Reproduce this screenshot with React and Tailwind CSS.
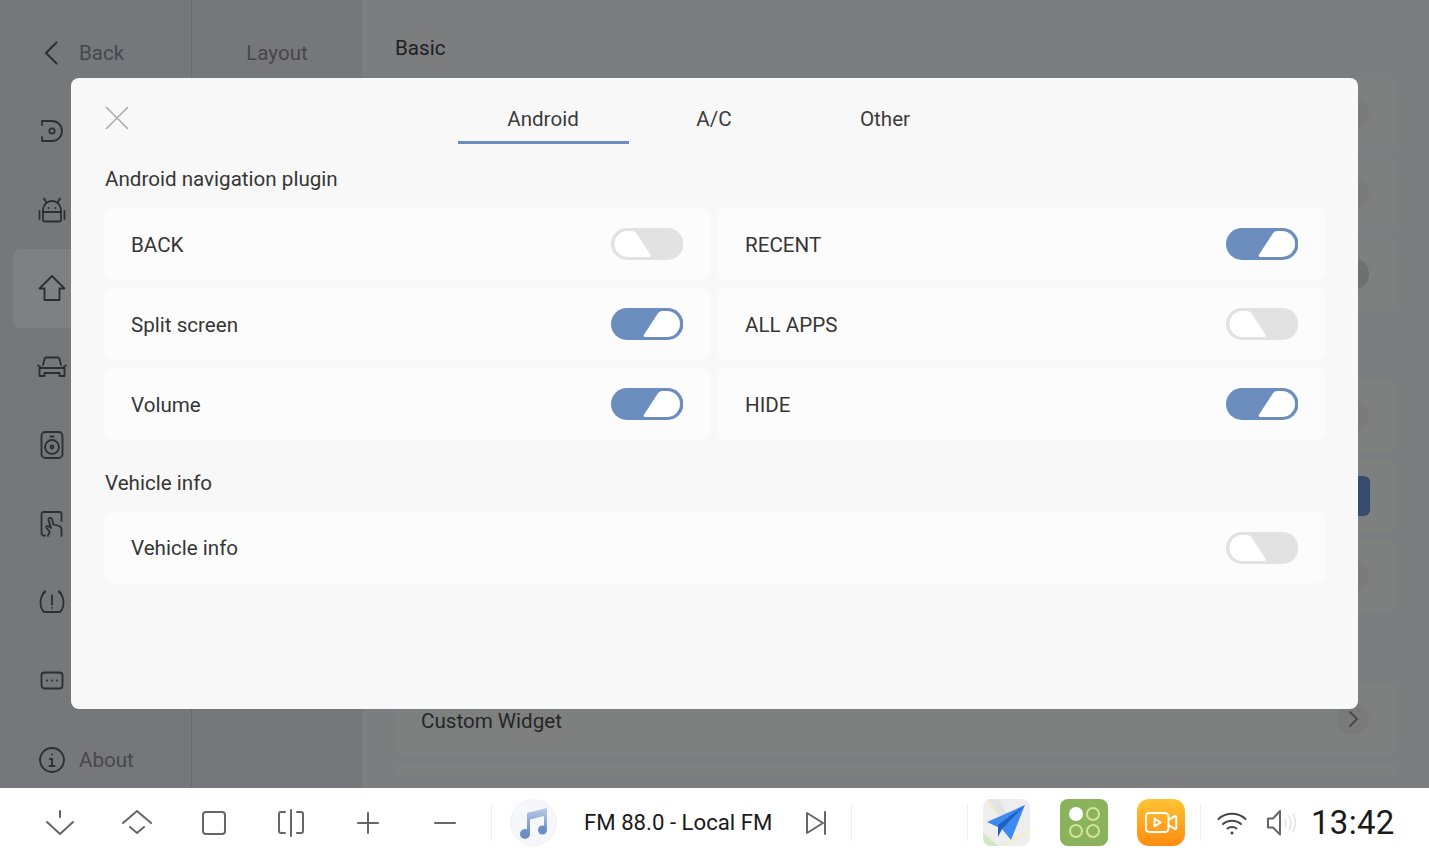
import { useState } from 'react'

// toggle drawn as one shape because the knob is slanted on one side
const Toggle = ({ on }) => (
  <svg width="72.5" height="32" viewBox="0 0 73 32" className="shrink-0">
    <rect x="0" y="0" width="73" height="32" rx="16" fill={on ? '#6b8ebf' : '#e2e2e2'} />
    {on
      ? <path d="M33 27 Q32.5 29 34.5 29 H56.5 A13 13 0 0 0 56.5 3 H52 Q48.5 3 46.5 6.5 Z" fill="#fff" />
      : <path d="M40 27 Q40.5 29 38.5 29 H16.5 A13 13 0 0 1 16.5 3 H21 Q24.5 3 26.5 6.5 Z" fill="#fff" />}
  </svg>
)

const Row = ({ label, on, h = 'h-[72px]' }) => (
  <div className={`${h} bg-[#fcfcfc] rounded-lg pl-[27px] pr-[27px] flex items-center justify-between`}>
    <span className="text-[20.6px] text-[#363636] mt-[2px]">{label}</span>
    <Toggle on={on} />
  </div>
)

const stroke = { fill: 'none', stroke: '#2d2e30', strokeWidth: 1.8, strokeLinecap: 'round', strokeLinejoin: 'round' }

const sideIcons = [
  // dashcam disc
  <svg key="a" width="28" height="28" viewBox="0 0 28 28" {...stroke}><path d="M4 8V4h10a10 10 0 0 1 0 20H4v-4" /><circle cx="14" cy="14" r="2.7" /></svg>,
  // android
  <svg key="b" width="28" height="28" viewBox="0 0 28 28" {...stroke}><path d="M5 24V14a9 9 0 0 1 18 0v10a1.500 1.500 0 0 1-1.500 1.500h-15A1.500 1.500 0 0 1 5 24Z" /><path d="M5 16h18M8 6 6 2.500M20 6l2-3.500M1.500 15v8M26.500 15v8" /><path d="M10.500 12h.1M17.500 12h.1" /></svg>,
  // home
  <svg key="c" width="28" height="28" viewBox="0 0 28 28" {...stroke}><path d="M14 2 1.500 14.500H6.500V26h15V14.500h5Z" /></svg>,
  // car
  <svg key="d" width="30" height="28" viewBox="0 0 30 28" {...stroke}><path d="M3 15h24M6 12l1.500-6a2 2 0 0 1 2-1.500h11a2 2 0 0 1 2 1.500L24 12M1 12.500l3 2M29 12.500l-3 2M2.500 15v8h5v-3h15v3h5v-8" /></svg>,
  // speaker
  <svg key="e" width="28" height="28" viewBox="0 0 28 28" {...stroke}><rect x="3.500" y="1" width="21" height="26" rx="4" /><circle cx="14" cy="16" r="7" /><circle cx="14" cy="16" r="1.500" /><path d="M12.500 5.500h3" /></svg>,
  // touch: frame open at the lower right, hand with raised finger
  <svg key="f" width="28" height="28" viewBox="0 0 28 28" {...stroke}><path d="M7 25.500H5.500a2 2 0 0 1-2-2V4a2 2 0 0 1 2-2h16a2 2 0 0 1 2 2v7" /><path d="M10 26c-.500-2 2.500-2.500 1.500-4.500L8.500 18c-1-1.500 1-3 2.500-1.500l2 1.500-2.500-8c-.500-2.500 3-3 3.500-.500l1.500 5 5.500 1.500c2 .500 2.500 2 2.500 3.500V26" /></svg>,
  // tpms
  <svg key="g" width="26" height="26" viewBox="0 0 26 26" {...stroke}><path d="M6 2.500C2.500 6 1.500 10 1.500 13.500c0 4 1.500 7.500 3.500 9.500h16c2-2 3.500-5.500 3.500-9.500 0-3.500-1-7.500-4.500-11" /><path d="M13 6.500v9M13 19v.1M6 2.500 4 4.500M20 2.500l2 2" /></svg>,
  // more
  <svg key="h" width="28" height="28" viewBox="0 0 28 28" {...stroke}><rect x="3.500" y="5.500" width="21" height="16" rx="3" /><path d="M9 13.500h.1M14 13.500h.1M19 13.500h.1" /></svg>,
]

const bar = { fill: 'none', stroke: '#666666', strokeWidth: 2, strokeLinecap: 'round', strokeLinejoin: 'round' }

const navIcons = [
  <svg key="a" width="30" height="26" viewBox="0 0 30 26" {...bar}><path d="M15 1v6M2 12l13 12 13-12" /></svg>,
  <svg key="b" width="32" height="26" viewBox="0 0 32 26" {...bar}><path d="M2 13 16 1l14 12M9 17l7 6 7-6" /></svg>,
  <svg key="c" width="26" height="26" viewBox="0 0 26 26" {...bar}><rect x="2" y="2" width="22" height="22" rx="3" /></svg>,
  <svg key="d" width="28" height="28" viewBox="0 0 28 28" {...bar}><path d="M8 3H4a2 2 0 0 0-2 2v17a2 2 0 0 0 2 2h4M20 3h4a2 2 0 0 1 2 2v17a2 2 0 0 1-2 2h-4M14 1v26" /></svg>,
  <svg key="e" width="24" height="24" viewBox="0 0 24 24" {...bar}><path d="M12 2v20M2 12h20" /></svg>,
  <svg key="f" width="24" height="24" viewBox="0 0 24 24" {...bar}><path d="M2 12h20" /></svg>,
]

const Sep = ({ className }) => <div className={`w-px h-[37px] bg-[#eeeeee] shrink-0 ${className}`} />

export default function App() {
  const [tab] = useState('Android')
  return (
    <div className="relative w-[1429px] h-[857px] overflow-hidden bg-white flex flex-col" style={{ fontFamily: 'Roboto, sans-serif' }}>

      {/* page behind the dialog */}
      <div className="h-[788px] shrink-0 flex bg-[#76777b] overflow-hidden">
        <div className="w-[192px] shrink-0 border-r border-[#6b6c70] flex flex-col">
          <div className="h-[92px] shrink-0 flex items-center pl-[44px] pt-[13px] gap-[21px]">
            <svg width="14" height="24" viewBox="0 0 14 24" fill="none" stroke="#2d2e30" strokeWidth="2" strokeLinecap="round" strokeLinejoin="round"><path d="M12.500 1.500 2 12l10.500 10.500" /></svg>
            <span className="text-[20.6px] text-[#47484b] mt-[1px]">Back</span>
          </div>
          <div className="flex flex-col pl-[13px]">
            {sideIcons.map((icon, i) => (
              <div key={i} className={`h-[78.5px] w-[78px] rounded-lg flex items-center justify-center ${i === 2 ? 'bg-[#7f8083]' : ''}`}>{icon}</div>
            ))}
          </div>
          <div className="flex items-center pl-[39px] gap-[14px] mt-[25px]">
            <svg width="26" height="26" viewBox="0 0 26 26" fill="none" stroke="#2d2e30" strokeWidth="1.8" strokeLinecap="round" strokeLinejoin="round"><circle cx="13" cy="13" r="12" /><path d="M11 12h2v7M10.500 19h5M13 7.500v.1" /></svg>
            <span className="text-[20.6px] text-[#47484b]">About</span>
          </div>
        </div>
        <div className="w-[170px] shrink-0 flex justify-center pt-[39px]">
          <span className="text-[20.6px] leading-[28px] text-[#47484b]">Layout</span>
        </div>
        <div className="flex-1 bg-[#7c7d7f] pl-[33px] pr-[33px] flex flex-col overflow-hidden">
          <div className="h-[78px] shrink-0 pt-[34px] text-[20.6px] leading-[28px] text-[#1f2021]">Basic</div>
          <div className="flex flex-col gap-2">
            {[0, 1, 2].map(i => (
              <div key={i} className="h-[72px] bg-[#7e807f] rounded-lg flex items-center justify-end pr-[27px]">
                <div className={`w-8 h-8 rounded-full ${i === 2 ? 'bg-[#6f7070]' : 'bg-[#7a7b7a]'}`} />
              </div>
            ))}
          </div>
          <div className="flex flex-col gap-2 mt-[70px]">
            {[0, 1, 2].map(i => (
              <div key={i} className="h-[72px] bg-[#7e807f] rounded-lg flex items-center justify-end pr-[26px]">
                {i === 1
                  ? <div className="w-[80px] h-10 rounded-md bg-[#374b6c]" />
                  : <div className="w-8 h-8 mr-px rounded-full bg-[#7a7b7a]" />}
              </div>
            ))}
          </div>
          <div className="h-[72px] shrink-0 mt-[71px] bg-[#7e807f] rounded-lg flex items-center justify-between pl-[26px] pr-[27px]">
            <span className="text-[20.6px] text-[#252627] mt-[4px]">Custom Widget</span>
            <div className="w-8 h-8 rounded-full bg-[#797a79] flex items-center justify-center">
              <svg width="9" height="16" viewBox="0 0 9 16" fill="none" stroke="#47484b" strokeWidth="1.8" strokeLinecap="round" strokeLinejoin="round"><path d="m1 1 7 7-7 7" /></svg>
            </div>
          </div>
          <div className="h-[12px] shrink-0 mt-2 bg-[#7e807f] rounded-t-lg" />
        </div>
      </div>

      {/* dialog */}
      <div className="absolute left-[71px] top-[78px] w-[1287px] h-[631px] bg-[#f8f8f8] rounded-lg px-[33px]">
        <div className="relative h-[66px] flex justify-center">
          <svg className="absolute left-[1px] top-[28px]" width="24" height="24" viewBox="0 0 24 24" fill="none" stroke="#a8a8a8" strokeWidth="1.5"><path d="M1 1l22 22M23 1 1 23" /></svg>
          {['Android', 'A/C', 'Other'].map(t => (
            <div key={t} className={`w-[171px] flex items-center justify-center pt-[20px] pr-px text-[20.6px] text-[#3c3c3c] border-b-[3px] ${tab === t ? 'border-[#6b8ebf]' : 'border-transparent'}`}>{t}</div>
          ))}
        </div>
        <div className="text-[20.6px] leading-[28px] text-[#363636] pl-px mt-[21px] mb-[15px]">Android navigation plugin</div>
        <div className="grid grid-cols-[606px_607px] gap-2">
          <Row label="BACK" on={false} />
          <Row label="RECENT" on />
          <Row label="Split screen" on />
          <Row label="ALL APPS" on={false} />
          <Row label="Volume" on />
          <Row label="HIDE" on />
        </div>
        <div className="text-[20.6px] leading-[28px] text-[#363636] pl-px mt-[29px] mb-[15px]">Vehicle info</div>
        <Row label="Vehicle info" on={false} h="h-[71px]" />
      </div>

      {/* system bar */}
      <div className="flex-1 flex items-center bg-white pl-[21px]">
        {navIcons.map((icon, i) => (
          <div key={i} className="w-[77px] shrink-0 flex items-center justify-center">{icon}</div>
        ))}
        <Sep className="ml-[8px]" />
        <div className="ml-[18px] w-[47px] h-[47px] rounded-full bg-[#f6f7fb] border border-[#f0f1f5] flex items-center justify-center shrink-0">
          <svg width="30" height="32" viewBox="0 0 30 32">
            <defs><linearGradient id="note" x1="0" y1="0" x2="0" y2="1"><stop offset="0" stopColor="#b9c9ea" /><stop offset="1" stopColor="#6b8ec6" /></linearGradient></defs>
            <path d="M8 6 28 1v22h-3V9L11 12.500V27H8Z" fill="url(#note)" />
            <circle cx="6" cy="27" r="5" fill="#6b8ec6" /><circle cx="23.500" cy="23" r="4.500" fill="#6b8ec6" />
          </svg>
        </div>
        <span className="ml-[27px] w-[188px] shrink-0 whitespace-nowrap text-[22.2px] text-[#1a1a1a] mt-[1px]">FM 88.0 - Local FM</span>
        <div className="ml-[33px] shrink-0">
          <svg width="22" height="24" viewBox="0 0 22 24" fill="none" stroke="#666666" strokeWidth="2" strokeLinecap="round" strokeLinejoin="round"><path d="M2 2v20l16-10ZM20 1v22" /></svg>
        </div>
        <Sep className="ml-[24px]" />
        <Sep className="ml-[115px]" />
        <div className="ml-[15px] w-[47px] h-[47px] rounded-lg overflow-hidden shrink-0">
          <svg width="47" height="47" viewBox="0 0 47 47">
            <rect width="47" height="47" fill="#eeeeee" />
            <path d="M0 34 16 47H0Z" fill="#cfe8c4" />
            <path d="M2 0h14l8 14-8 4Z" fill="#e3e3e3" />
            <path d="M4 0 18 20M20 47 46 31" stroke="#f5ecc4" strokeWidth="2" fill="none" />
            <path d="M4 23 42 6 28 41 19 30Z" fill="#3d8bf0" />
            <path d="M42 6 19 30 15 38 15 26Z" fill="#1f5fc0" />
          </svg>
        </div>
        <div className="ml-[30px] w-[48px] h-[47px] rounded-lg bg-[#8ab35c] flex items-center justify-center shrink-0">
          <div className="grid grid-cols-2 gap-[3px]">
            <div className="w-[14px] h-[14px] rounded-full bg-white" />
            <div className="w-[14px] h-[14px] rounded-full border-2 border-[#d5e39b]" />
            <div className="w-[14px] h-[14px] rounded-full border-2 border-[#d5e39b]" />
            <div className="w-[14px] h-[14px] rounded-full border-2 border-[#d5e39b]" />
          </div>
        </div>
        <div className="ml-[29px] w-[48px] h-[47px] rounded-xl bg-gradient-to-b from-[#ffc433] to-[#ff8a0d] flex items-center justify-center shrink-0">
          <svg width="33" height="23" viewBox="0 0 38 26" fill="none" stroke="#fff" strokeWidth="2.2" strokeLinejoin="round"><rect x="1" y="2" width="26" height="22" rx="4" /><path d="M27 10l7-4a1 1 0 0 1 2 1v12a1 1 0 0 1-2 1l-7-4" /><path d="M11 8.500v9l7-4.500Z" /></svg>
        </div>
        <Sep className="ml-[15px]" />
        <div className="ml-[16px] shrink-0">
          <svg width="30" height="24" viewBox="0 0 30 24" fill="none" stroke="#444444" strokeWidth="2" strokeLinecap="round"><path d="M1.500 8C9 1 21 1 28.500 8M6 13c5-4.500 13-4.500 18 0M10.500 17.500c2.500-2 6.500-2 9 0" /><circle cx="15" cy="22" r="1.500" fill="#444444" stroke="none" /></svg>
        </div>
        <div className="ml-[20px] shrink-0">
          <svg width="29" height="26" viewBox="0 0 29 26" fill="none" strokeLinecap="round" strokeLinejoin="round"><path d="M1 8.500v9h5l7 7V1L6 8.500Z" stroke="#666666" strokeWidth="2" /><path d="M18 9c1.500 2.500 1.500 5.500 0 8M22 6c2.500 4 2.500 10 0 14M26 4c3 5 3 13 0 18" stroke="#e5e5e5" strokeWidth="1.5" /></svg>
        </div>
        <span className="ml-[15px] text-[33px] tracking-[0.3px] text-[#1a1a1a] whitespace-nowrap">13:42</span>
      </div>
    </div>
  )
}
